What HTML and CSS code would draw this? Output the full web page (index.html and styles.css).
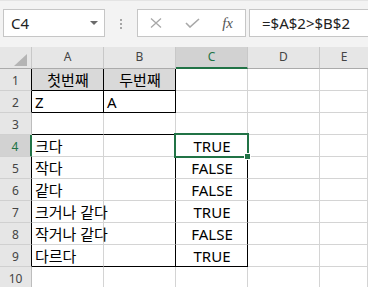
FILE: index.html
```html
<!DOCTYPE html>
<html lang="ko">
<head>
  <meta charset="UTF-8">
  <meta name="viewport" content="width=device-width, initial-scale=1.0">
  <link rel="stylesheet" href="styles.css">
</head>
<body>
  <div class="toolbar">
    <div class="namebox">
      <span>C4</span>
      <span class="caret"></span>
    </div>
    <div class="dots"><i></i><i></i><i></i></div>
    <div class="fxbox">
      <svg class="ico" width="12" height="10" viewBox="0 0 12 10">
        <path d="M1 0.5 L11 9.5 M11 0.5 L1 9.5" stroke="#a8a8a8" stroke-width="1.3" fill="none"/>
      </svg>
      <svg class="ico" width="15" height="10" viewBox="0 0 15 10">
        <path d="M1 5 L5 9 L14 1" stroke="#a8a8a8" stroke-width="1.6" fill="none"/>
      </svg>
      <span class="fx">fx</span>
    </div>
    <div class="formula">=$A$2&gt;$B$2</div>
  </div>

  <div class="sheet">
    <!-- header row -->
    <div class="hd corner">
      <svg width="13" height="12" viewBox="0 0 13 12"><path d="M13 0 L13 12 L0 12 Z" fill="#b4b4b4"/></svg>
    </div>
    <div class="hd">A</div>
    <div class="hd">B</div>
    <div class="hd sel-col">C</div>
    <div class="hd">D</div>
    <div class="hd last">E</div>

    <!-- 1 -->
    <div class="rh edge">1</div>
    <div class="c title bk-r bk-b">첫번째</div>
    <div class="c title bk-r bk-b">두번째</div>
    <div class="c"></div>
    <div class="c"></div>
    <div class="c"></div>

    <!-- 2 -->
    <div class="rh edge">2</div>
    <div class="c bk-r bk-b">Z</div>
    <div class="c bk-r bk-b">A</div>
    <div class="c"></div>
    <div class="c"></div>
    <div class="c"></div>

    <!-- 3 -->
    <div class="rh">3</div>
    <div class="c bk-b"></div>
    <div class="c bk-b"></div>
    <div class="c bk-b"></div>
    <div class="c"></div>
    <div class="c"></div>

    <!-- 4 -->
    <div class="rh sel-row">4</div>
    <div class="c">크다</div>
    <div class="c bk-r"></div>
    <div class="c mid bk-r active">TRUE
      <div class="selbox"></div>
      <div class="handle"></div>
    </div>
    <div class="c"></div>
    <div class="c"></div>

    <!-- 5 -->
    <div class="rh edge">5</div>
    <div class="c">작다</div>
    <div class="c bk-r"></div>
    <div class="c mid bk-r">FALSE</div>
    <div class="c"></div>
    <div class="c"></div>

    <!-- 6 -->
    <div class="rh edge">6</div>
    <div class="c">같다</div>
    <div class="c bk-r"></div>
    <div class="c mid bk-r">FALSE</div>
    <div class="c"></div>
    <div class="c"></div>

    <!-- 7 -->
    <div class="rh edge">7</div>
    <div class="c">크거나 같다</div>
    <div class="c bk-r"></div>
    <div class="c mid bk-r">TRUE</div>
    <div class="c"></div>
    <div class="c"></div>

    <!-- 8 -->
    <div class="rh edge">8</div>
    <div class="c">작거나 같다</div>
    <div class="c bk-r"></div>
    <div class="c mid bk-r">FALSE</div>
    <div class="c"></div>
    <div class="c"></div>

    <!-- 9 -->
    <div class="rh edge">9</div>
    <div class="c bk-b">다르다</div>
    <div class="c bk-r bk-b"></div>
    <div class="c mid bk-r bk-b">TRUE</div>
    <div class="c"></div>
    <div class="c"></div>

    <!-- 10 -->
    <div class="rh">10</div>
    <div class="c"></div>
    <div class="c"></div>
    <div class="c"></div>
    <div class="c"></div>
    <div class="c"></div>
  </div>
</body>
</html>
```

FILE: styles.css
```css
body {
  margin: 0;
  background: #fff;
  font-family: "Noto Sans", "Noto Sans CJK KR", sans-serif;
  overflow: hidden;
}

.toolbar {
  height: 47px;
  background: #f3f3f3;
  border-top: 1px solid #e4e4e4;
  box-sizing: border-box;
  display: flex;
  align-items: flex-start;
  padding: 8px 0 0 3px;
}

.namebox,
.fxbox,
.formula {
  height: 28px;
  box-sizing: border-box;
  background: #fff;
  border: 1px solid #c6c6c6;
  display: flex;
  align-items: center;
}

.namebox {
  width: 102px;
  padding: 0 6px 0 7px;
  justify-content: space-between;
  font-size: 15px;
  color: #222;
}

.caret {
  width: 0;
  height: 0;
  border-left: 4px solid transparent;
  border-right: 4px solid transparent;
  border-top: 4px solid #6b6b6b;
}

.dots {
  width: 32px;
  display: flex;
  flex-direction: column;
  align-items: center;
  gap: 2px;
  padding-top: 10px;
}

.dots i {
  width: 2px;
  height: 2px;
  background: #a6a6a6;
}

.fxbox {
  width: 109px;
  padding: 0 12px 0 12px;
  justify-content: space-between;
}

.fx {
  font-family: "Liberation Serif", serif;
  font-style: italic;
  font-size: 15px;
  color: #555;
}

.formula {
  flex: 1;
  margin-left: 3px;
  border-right: none;
  padding-left: 12px;
  font-size: 15px;
  color: #222;
}

.sheet {
  display: grid;
  grid-template-columns: 32px 72px 72px 72px 72px 1fr;
  grid-auto-rows: 22px;
}

.hd,
.rh,
.c {
  box-sizing: border-box;
  border-right: 1px solid #d4d4d4;
  border-bottom: 1px solid #d4d4d4;
}

.hd {
  background: #e6e6e6;
  border-right-color: #c8c8c8;
  border-bottom-color: #ababab;
  font-size: 12px;
  color: #444;
  display: flex;
  align-items: center;
  justify-content: center;
  padding-bottom: 3px;
}

.hd.corner {
  justify-content: flex-end;
  align-items: flex-end;
  padding: 0 4px 2px 0;
}

.hd.corner svg {
  display: block;
}

.hd.last {
  border-right: none;
}

.hd.sel-col {
  background: #d2d2d2;
  color: #217346;
  border-bottom: 2px solid #217346;
  padding-bottom: 1px;
}

.rh {
  background: #e6e6e6;
  border-right-color: #bdbdbd;
  border-bottom-color: #d0d0d0;
  font-size: 12px;
  color: #444;
  display: flex;
  align-items: center;
  justify-content: center;
  padding-top: 1px;
}

.rh.edge {
  border-right-color: #000;
}

.rh.sel-row {
  background: #d2d2d2;
  color: #217346;
  border-right: 2px solid #217346;
}

.c {
  font-size: 15px;
  color: #000;
  line-height: 20px;
  padding: 1px 2px 0 3px;
  white-space: nowrap;
}

.c.title {
  background: #d9d9d9;
  text-align: center;
}

.c.mid {
  text-align: center;
}

.bk-r {
  border-right-color: #000;
}

.bk-b {
  border-bottom-color: #000;
}

.active {
  position: relative;
}

.selbox {
  position: absolute;
  left: -2px;
  top: -2px;
  width: 75px;
  height: 25px;
  box-sizing: border-box;
  border: 2px solid #217346;
}

.handle {
  position: absolute;
  left: 68px;
  top: 18px;
  width: 7px;
  height: 7px;
  box-sizing: border-box;
  background: #217346;
  border: 1px solid #fff;
}
```
